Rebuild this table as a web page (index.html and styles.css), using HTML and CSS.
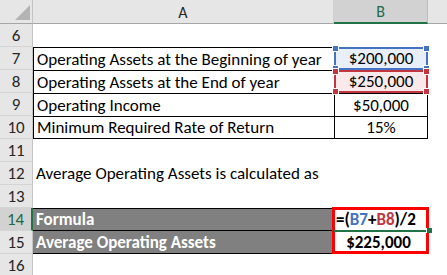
FILE: index.html
```html
<!DOCTYPE html>
<html>
<head>
<meta charset="utf-8">
<link rel="stylesheet" href="styles.css">
</head>
<body>
<div class="sheet">
  <div class="corner"><span class="tri"></span></div>
  <div class="colhead">A</div>
  <div class="colhead sel">B</div>
  <div class="colhead rest"></div>

  <div class="rowhead">6</div><div class="cell"></div><div class="cell"></div><div class="cell"></div>

  <div class="rowhead">7</div>
  <div class="cell tA">Operating Assets at the Beginning of year</div>
  <div class="cell tB ref blue">$200,000<span class="h tl"></span><span class="h tr"></span><span class="h bl"></span><span class="h br"></span></div>
  <div class="cell"></div>

  <div class="rowhead">8</div>
  <div class="cell tA">Operating Assets at the End of year</div>
  <div class="cell tB ref red">$250,000<span class="h tl"></span><span class="h tr"></span><span class="h bl"></span><span class="h br"></span></div>
  <div class="cell"></div>

  <div class="rowhead">9</div>
  <div class="cell tA">Operating Income</div>
  <div class="cell tB">$50,000</div>
  <div class="cell"></div>

  <div class="rowhead">10</div>
  <div class="cell tA last">Minimum Required Rate of Return</div>
  <div class="cell tB last">15%</div>
  <div class="cell"></div>

  <div class="rowhead">11</div><div class="cell"></div><div class="cell"></div><div class="cell"></div>

  <div class="rowhead">12</div>
  <div class="cell text">Average Operating Assets is calculated as</div>
  <div class="cell"></div><div class="cell"></div>

  <div class="rowhead">13</div><div class="cell"></div><div class="cell"></div><div class="cell"></div>

  <div class="rowhead active">14</div>
  <div class="cell dark top">Formula</div>
  <div class="cell formula">=(<span class="fb">B7</span>+<span class="fr">B8</span>)/2</div>
  <div class="cell"></div>

  <div class="rowhead">15</div>
  <div class="cell dark">Average Operating Assets</div>
  <div class="cell result">$225,000</div>
  <div class="cell"></div>

  <div class="rowhead">16</div><div class="cell"></div><div class="cell"></div><div class="cell"></div>

  <div class="redbox"></div>
  <div class="selline"><span class="fill"></span></div>
</div>
</body>
</html>
```

FILE: styles.css
```css
html, body {
  margin: 0;
  padding: 0;
  background: #ffffff;
}

body {
  font-family: Carlito, Lato, "Liberation Sans", sans-serif;
  color: #000;
}

.sheet {
  display: grid;
  grid-template-columns: 33px 301px 94px 1fr;
  grid-template-rows: 24px repeat(11, 23px);
  width: 447px;
  height: 275px;
  overflow: hidden;
}

.corner {
  background: #e6e6e6;
  border-right: 1px solid #c4c4c4;
  border-bottom: 1px solid #a6a6a6;
  box-sizing: border-box;
  display: flex;
  justify-content: flex-end;
  align-items: flex-end;
  padding: 0 2px 3px 0;
}

.tri {
  width: 15px;
  height: 15px;
  background: #b4b4b4;
  clip-path: polygon(100% 0, 100% 100%, 0 100%);
}

.colhead {
  background: #e6e6e6;
  border-right: 1px solid #cfcfcf;
  border-bottom: 1px solid #a6a6a6;
  box-sizing: border-box;
  display: flex;
  align-items: center;
  justify-content: center;
  font-size: 16px;
  color: #262626;
  padding-top: 1px;
}

.colhead.sel {
  background: #d2d2d2;
  color: #1d6b45;
  border-bottom: 2px solid #217346;
  border-right: 1px solid #bcbcbc;
}

.colhead.rest {
  border-right: none;
}

.rowhead {
  background: #e6e6e6;
  border-right: 1px solid #c4c4c4;
  border-bottom: 1px solid #d4d4d4;
  box-sizing: border-box;
  display: flex;
  align-items: center;
  justify-content: center;
  font-size: 17px;
  color: #262626;
}

.rowhead.active {
  background: #d2d2d2;
  color: #1d6b45;
  border-right: 2px solid #217346;
}

.cell {
  box-sizing: border-box;
  display: flex;
  align-items: center;
  font-size: 17px;
  white-space: nowrap;
  overflow: visible;
  min-width: 0;
}

.tA {
  border-top: 1px solid #000;
  border-left: 1px solid #000;
  padding-left: 3px;
}

.tB {
  border-top: 1px solid #000;
  border-left: 1px solid #000;
  border-right: 1px solid #000;
  justify-content: center;
}

.last {
  border-bottom: 1px solid #000;
}

.text {
  padding-left: 3px;
}

.ref {
  position: relative;
  z-index: 1;
}

.ref.blue {
  background: #e9eff9;
  border: 2px solid #4472c4;
}

.ref.red {
  background: #f9e9ea;
  border: 2px solid #c3363f;
}

.h {
  position: absolute;
  width: 5px;
  height: 5px;
  border: 1px solid #fff;
  box-sizing: content-box;
}

.blue .h { background: #4472c4; }
.red .h { background: #c3363f; z-index: 2; }

.h.tl { left: -4px; top: -4px; }
.h.tr { right: -4px; top: -4px; }
.h.bl { left: -4px; bottom: -4px; }
.h.br { right: -4px; bottom: -4px; }

.dark {
  background: #808080;
  color: #fff;
  font-weight: bold;
  padding-left: 3px;
  border-bottom: 1px solid #000;
}

.dark.top {
  border-top: 1px solid #000;
}

.formula {
  grid-column: 3;
  grid-row: 10;
  font-weight: bold;
  padding-left: 2px;
}

.fb { color: #4472c4; }
.fr { color: #c3363f; }

.result {
  grid-column: 3;
  grid-row: 11;
  font-weight: bold;
  justify-content: center;
  padding-right: 5px;
}

.redbox {
  grid-column: 3;
  grid-row: 10 / 12;
  border: 3px solid #ff0000;
  margin: -1px -1px 0 -2px;
  z-index: 3;
  pointer-events: none;
}

.selline {
  grid-column: 3;
  grid-row: 10;
  align-self: end;
  height: 2px;
  margin: 0 -3px -1px 0;
  background: #217346;
  position: relative;
  z-index: 4;
}

.fill {
  position: absolute;
  right: -1px;
  top: -2px;
  width: 5px;
  height: 5px;
  background: #217346;
  border-left: 1px solid #fff;
}
```
